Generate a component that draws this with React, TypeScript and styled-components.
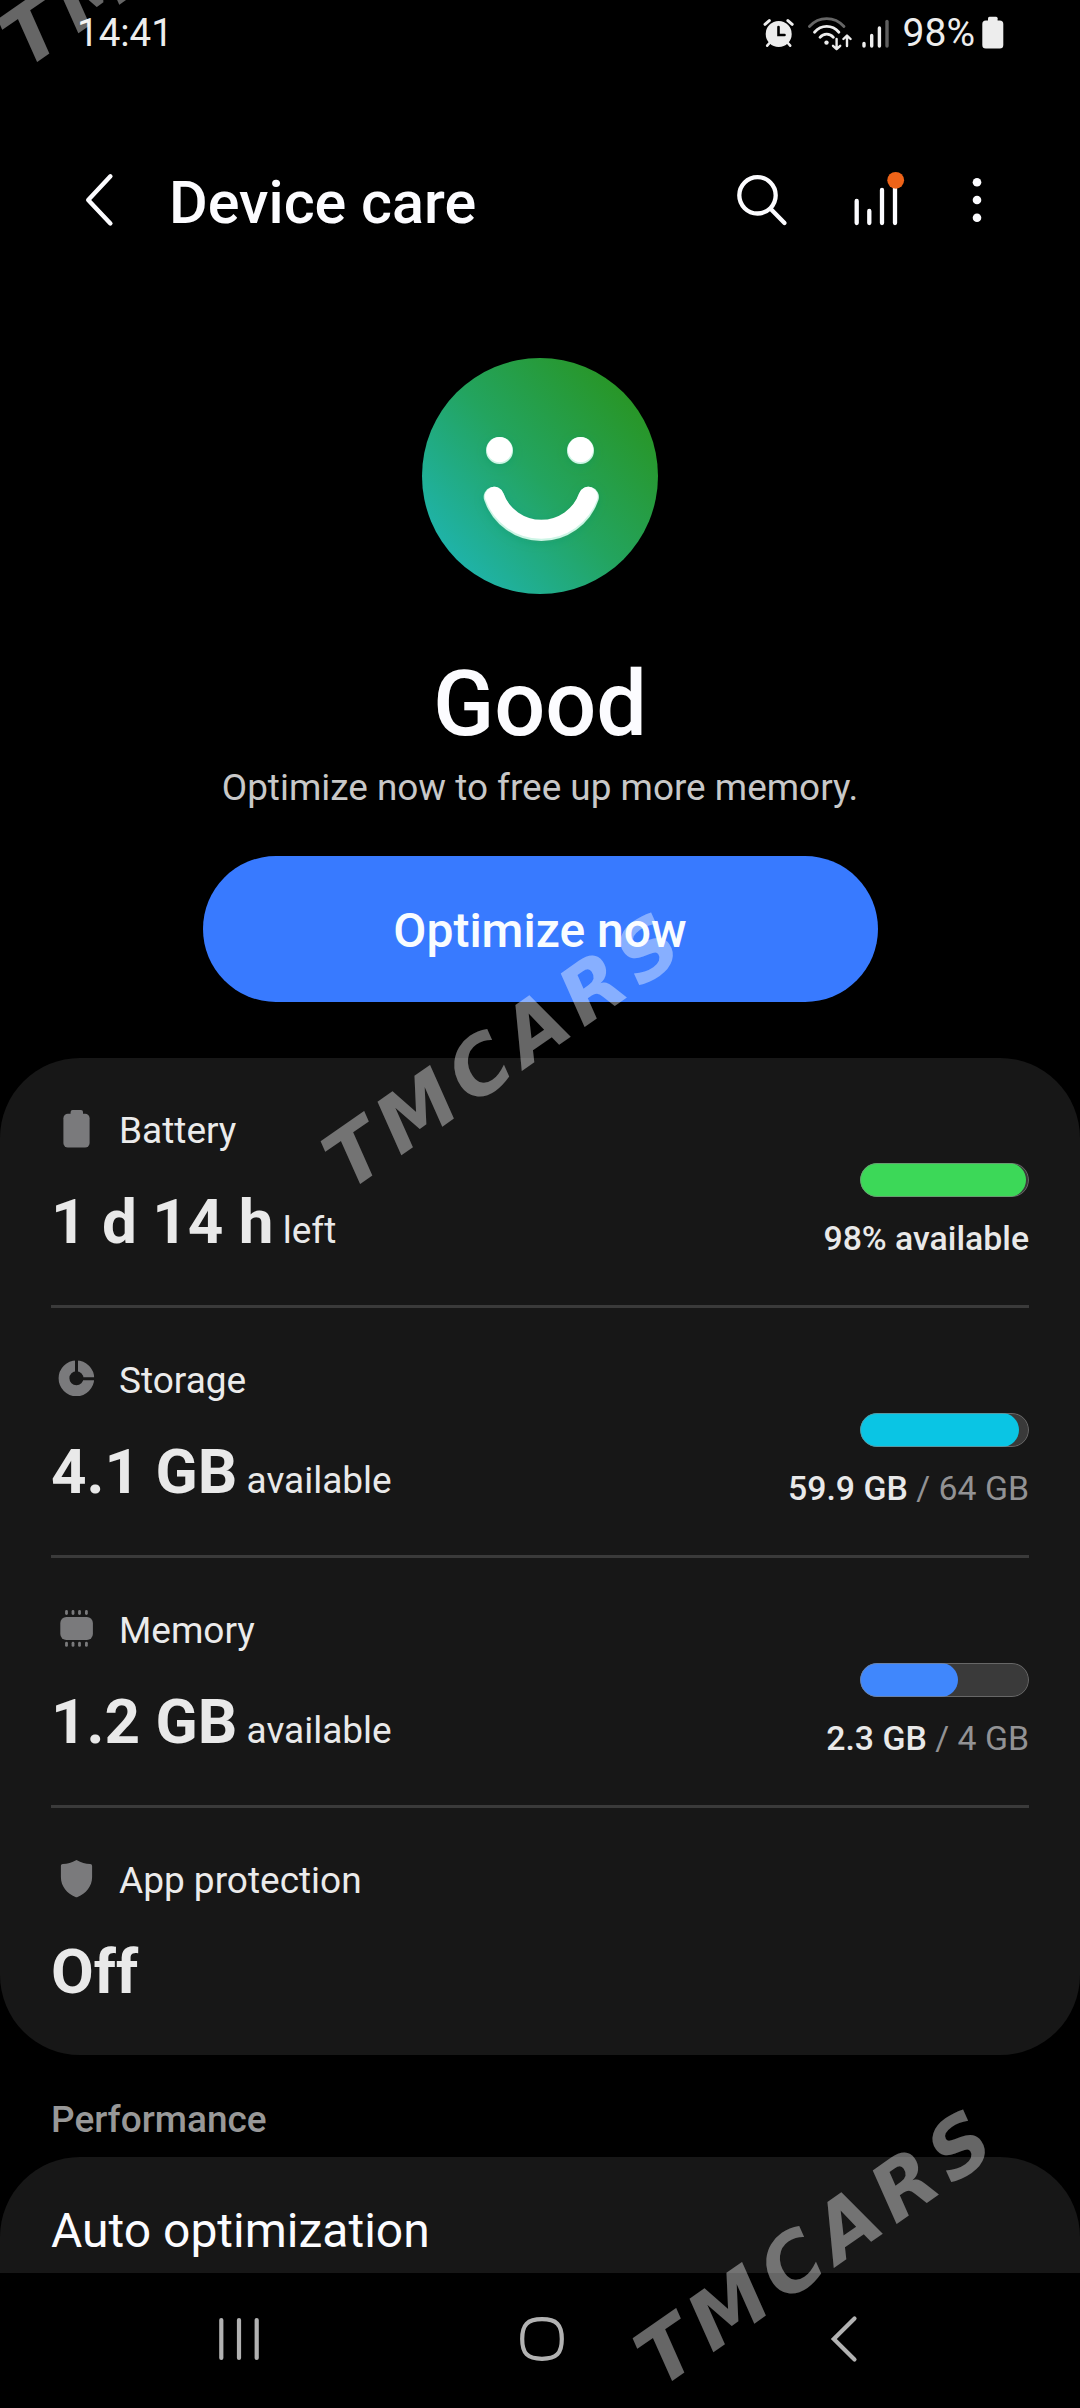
import React from "react";
import styled, { createGlobalStyle } from "styled-components";

const GlobalStyle = createGlobalStyle`
  html, body { margin: 0; padding: 0; background: #000; }
  *, *::before, *::after { box-sizing: border-box; }
`;

const Screen = styled.main`
  position: relative;
  display: flex;
  flex-direction: column;
  width: 1080px;
  height: 2408px;
  overflow: hidden;
  background: #000;
  color: #fcfcff;
  font-family: Roboto, "Liberation Sans", sans-serif;
  svg { display: block; flex: none; }
`;

const StatusBar = styled.header`
  display: flex;
  align-items: center;
  justify-content: space-between;
  height: 66px;
  padding: 0 76px 0 77px;
  color: #ededed;
  font-size: 38.5px;
  line-height: 46px;
`;

const StatusIcons = styled.div`
  display: flex;
  align-items: center;
  gap: 8px;
`;

const BatteryLevel = styled.span`
  margin: 0 -1px 0 3.5px;
  font-size: 39px;
`;

const AppBar = styled.div`
  display: flex;
  align-items: center;
  height: 268px;
  padding: 0 92px 0 75px;
`;

const Title = styled.h1`
  flex: 1;
  margin: 5px 0 0 44px;
  font-size: 59.3px;
  font-weight: 500;
  line-height: 70px;
`;

const IconButton = styled.button<{ $gap?: number }>`
  display: flex;
  margin: 0 0 0 ${(p) => p.$gap ?? 0}px;
  padding: 0;
  border: 0;
  background: none;
  color: inherit;
`;

const Hero = styled.section`
  display: flex;
  flex-direction: column;
  align-items: center;
  height: 724px;
  padding-top: 24px;
`;

const Verdict = styled.h2`
  margin: 58px 0 0;
  font-size: 90px;
  font-weight: 500;
  line-height: 106px;
`;

const Hint = styled.p`
  margin: 8px 0 0;
  color: #c8c8c8;
  font-size: 36.9px;
  line-height: 44px;
`;

const PrimaryButton = styled.button`
  width: 675px;
  height: 146px;
  margin-top: 46px;
  padding: 3px 0 0;
  border: 0;
  border-radius: 73px;
  background: #387aff;
  color: #f8fcff;
  font: 500 48px/56px Roboto, "Liberation Sans", sans-serif;
`;

const Card = styled.section`
  height: 997px;
  padding: 0 51px;
  border-radius: 80px;
  background: #171717;
`;

const Row = styled.article`
  display: flex;
  justify-content: space-between;
  height: 250px;
  border-bottom: 3px solid #3a3a3a;
  &:last-child { height: 247px; border-bottom: 0; }
`;

const Info = styled.div`
  padding-top: 47px;
`;

const RowLabel = styled.div`
  display: flex;
  gap: 17px;
  height: 51px;
  color: #ebebeb;
  font-size: 37px;
  line-height: 51px;
`;

const RowValue = styled.div`
  margin-top: 29px;
  color: #e9e9e9;
  font-size: 62px;
  font-weight: 700;
  line-height: 73px;
  white-space: pre;
`;

const Unit = styled.span`
  font-size: 37px;
  font-weight: 400;
`;

const Usage = styled.div`
  display: flex;
  flex-direction: column;
  align-items: flex-end;
  padding-top: 105px;
`;

const Track = styled.div`
  position: relative;
  width: 169px;
  height: 34px;
  overflow: hidden;
  border-radius: 17px;
  background: #3a3a3a;
  &::after {
    content: "";
    position: absolute;
    inset: 0;
    border: 1px solid rgba(128, 128, 128, 0.65);
    border-radius: 17px;
  }
`;

const Fill = styled.div<{ $color: string }>`
  height: 100%;
  border-radius: 17px;
  background: ${(p) => p.$color};
`;

const UsageText = styled.div`
  margin-top: 21px;
  color: #e9e9e9;
  font-size: 33.8px;
  font-weight: 500;
  line-height: 41px;
  white-space: pre;
`;

const Total = styled.span`
  color: #929294;
  font-weight: 400;
`;

const SectionTitle = styled.h3`
  height: 102px;
  margin: 0;
  padding: 43px 51px 0;
  color: #989898;
  font-size: 37px;
  font-weight: 500;
  line-height: 44px;
`;

const SettingsList = styled.section`
  height: 116px;
  padding: 44px 51px 0;
  border-radius: 80px 80px 0 0;
  background: #171717;
  font-size: 48px;
  line-height: 60px;
`;

const NavBar = styled.nav`
  display: flex;
  align-items: center;
  justify-content: space-between;
  height: 135px;
  padding: 0 206px 4px 209px;
  color: #b2b2b2;
`;

const Watermark = styled.div<{ $x: number; $y: number }>`
  position: absolute;
  left: ${(p) => p.$x}px;
  top: ${(p) => p.$y}px;
  color: rgba(255, 255, 255, 0.4);
  font: italic 700 79px/1 "DejaVu Sans", sans-serif;
  font-kerning: none;
  letter-spacing: 8.6px;
  white-space: nowrap;
  transform: rotate(-35deg);
  transform-origin: 0 0;
  pointer-events: none;
`;

const AlarmIcon = () => (
  <svg width="36" height="32" viewBox="0 0 36 32" fill="none" stroke="#ededed" strokeLinecap="round">
    <circle cx="15.7" cy="17" r="13" fill="#ededed" stroke="none" />
    <path d="M2 7.3 6.3 3.6M29.2 7.3 24.9 3.6" strokeWidth="3" />
    <path d="M7 25.5 4.2 28.7M24.4 25.5 27.2 28.7" strokeWidth="2.6" />
    <path d="M15.5 10v8h6" stroke="#000" strokeWidth="2.6" />
  </svg>
);

const WifiIcon = () => (
  <svg width="46" height="36" viewBox="0 0 46 36" fill="none" stroke="#ededed" strokeWidth="2.8" strokeLinecap="round" strokeLinejoin="round">
    <path d="M2.4 11.5C12 1 27.4 1 37 11.5" stroke="#666" />
    <path d="M7.5 17.2c6.8-7.7 17.6-7.7 24.4 0" />
    <path d="M13 22.3c3.7-4.3 9.7-4.3 13.4 0" />
    <circle cx="19.5" cy="27.6" r="2.2" fill="#ededed" stroke="none" />
    <path d="M29.6 24v10M26 30.8l3.6 3.4 3.6-3.4" strokeWidth="2.4" />
    <path d="M40 31V21M36.4 24l3.6-3.4 3.6 3.4" strokeWidth="2.4" />
  </svg>
);

const SignalIcon = () => (
  <svg width="30" height="32" viewBox="0 0 30 32" strokeWidth="3.4" strokeLinecap="round" stroke="#ededed">
    <path d="M3 26.5v2.5M10.7 18.5v10.5M18.4 11v18" />
    <path d="M26 4.5v24.5" stroke="#5f5f5f" />
  </svg>
);

const StatusBatteryIcon = () => (
  <svg width="22" height="34" viewBox="0 0 22 34" fill="#ededed">
    <rect x="0.3" y="4.5" width="21" height="28" rx="3.5" />
    <rect x="6" y="0.8" width="9.6" height="8" rx="1.5" />
  </svg>
);

const BackIcon = () => (
  <svg width="50" height="60" viewBox="0 0 50 60" fill="none" stroke="currentColor" strokeWidth="4.4" strokeLinecap="round" strokeLinejoin="round">
    <path d="M35.4 6.3 13.2 30l22.2 23.500" />
  </svg>
);

const SearchIcon = () => (
  <svg width="60" height="60" viewBox="0 0 60 60" fill="none" stroke="currentColor" strokeWidth="4.3" strokeLinecap="round">
    <circle cx="27.5" cy="25.3" r="18.2" />
    <path d="M41.5 39.8 54.5 53" />
  </svg>
);

const ReportIcon = () => (
  <svg width="60" height="60" viewBox="0 0 60 60" fill="none" stroke="currentColor" strokeWidth="4.3" strokeLinecap="round">
    <path d="M11.7 31v22M24.3 41v12M37 20v33M50 14v39" />
    <circle cx="50.7" cy="10.3" r="8.4" fill="#ee6318" stroke="none" />
  </svg>
);

const MoreIcon = () => (
  <svg width="20" height="60" viewBox="0 0 20 60" fill="currentColor">
    <circle cx="9" cy="12.3" r="4.3" />
    <circle cx="9" cy="30" r="4.3" />
    <circle cx="9" cy="47.8" r="4.3" />
  </svg>
);

const SmileyIcon = () => (
  <svg width="236" height="236" viewBox="0 0 236 236" fill="none" strokeLinecap="round">
    <defs>
      <linearGradient id="face" x1="0.12" y1="0.84" x2="0.88" y2="0.18">
        <stop offset="0" stopColor="#1fb3a9" />
        <stop offset="0.5" stopColor="#23a45f" />
        <stop offset="1" stopColor="#289628" />
      </linearGradient>
      <filter id="glow" x="-20%" y="-20%" width="140%" height="150%">
        <feDropShadow dx="0" dy="2" stdDeviation="5" floodColor="#149065" floodOpacity="0.35" />
      </filter>
    </defs>
    <circle cx="118" cy="118" r="118" fill="url(#face)" />
    <g filter="url(#glow)">
      <circle cx="77.5" cy="92.5" r="13.5" fill="#cdf5e6" />
      <circle cx="158.5" cy="92.5" r="13.5" fill="#cdf5e6" />
      <path d="M72 139a50 50 0 0 0 94.6 0" stroke="#cdf5e6" strokeWidth="20.5" />
      <circle cx="77.5" cy="91.6" r="12.6" fill="#fff" />
      <circle cx="158.5" cy="91.6" r="12.6" fill="#fff" />
      <path d="M72.3 138.3a50 50 0 0 0 94 0" stroke="#fff" strokeWidth="18.8" />
    </g>
  </svg>
);

const RowSvg = ({ children }: { children: React.ReactNode }) => (
  <svg width="51" height="51" viewBox="0 0 51 51" fill="#7a7a7c">
    {children}
  </svg>
);

const BatteryIcon = () => (
  <RowSvg>
    <rect x="12.4" y="8.7" width="26.2" height="33.8" rx="4.5" />
    <rect x="19.6" y="5" width="12.4" height="8" rx="2" />
  </RowSvg>
);

const StorageIcon = () => (
  <RowSvg>
    <circle cx="25.4" cy="23.3" r="12.4" fill="none" stroke="#7a7a7c" strokeWidth="10.8" />
    <path d="M25.5 4v14M31 23.8h14" stroke="#171717" strokeWidth="3" />
  </RowSvg>
);

const MemoryIcon = () => (
  <RowSvg>
    <rect x="9.3" y="12" width="32.6" height="23" rx="6" />
    {[15.5, 22, 28.5, 35.4].map((x) => (
      <React.Fragment key={x}>
        <rect x={x - 1.4} y="5" width="2.8" height="5" rx="1.4" />
        <rect x={x - 1.4} y="36.8" width="2.8" height="5" rx="1.4" />
      </React.Fragment>
    ))}
  </RowSvg>
);

const ShieldIcon = () => (
  <RowSvg>
    <path d="M25.5 5c4.8 2.6 9 3.8 13.7 4.1 1.2.1 1.9.8 1.9 2V22c0 9.5-6.3 16.600-14.5 20.100q-1.1.4-2.200 0C16.200 38.600 9.900 31.500 9.900 22V11.100c0-1.200.7-1.900 1.900-2C16.500 8.800 20.700 7.600 25.500 5Z" />
  </RowSvg>
);

const RecentsIcon = () => (
  <svg width="60" height="60" viewBox="0 0 60 60" stroke="currentColor" strokeWidth="4.2" strokeLinecap="round">
    <path d="M12.3 11v38M30 11v38M47.7 11v38" />
  </svg>
);

const HomeIcon = () => (
  <svg width="60" height="60" viewBox="0 0 60 60" fill="none" stroke="currentColor" strokeWidth="4.2">
    <path d="M30 10.2c14.5 0 19.8 5.3 19.8 19.8S44.500 49.800 30 49.800 10.200 44.500 10.200 30 15.500 10.200 30 10.200Z" />
  </svg>
);

const NavBackIcon = () => (
  <svg width="60" height="60" viewBox="0 0 60 60" fill="none" stroke="currentColor" strokeWidth="4.2" strokeLinecap="round">
    <path d="M40.5 9.5 19.8 30l20.700 20.500" />
  </svg>
);

type RowData = {
  icon: React.ReactNode;
  label: string;
  value: string;
  unit?: string;
  fill?: number;
  color?: string;
  used?: string;
  total?: string;
};

const rows: RowData[] = [
  { icon: <BatteryIcon />, label: "Battery", value: "1 d 14 h", unit: " left", fill: 98, color: "#3cd858", used: "98% available" },
  { icon: <StorageIcon />, label: "Storage", value: "4.1 GB", unit: " available", fill: 94, color: "#0ac5e4", used: "59.9 GB", total: " / 64 GB" },
  { icon: <MemoryIcon />, label: "Memory", value: "1.2 GB", unit: " available", fill: 58, color: "#4087fc", used: "2.3 GB", total: " / 4 GB" },
  { icon: <ShieldIcon />, label: "App protection", value: "Off" },
];

const marks = [
  { x: -12.3, y: 15.6 },
  { x: 310.5, y: 1137.9 },
  { x: 623.4, y: 2334.5 },
];

export default function App() {
  return (
    <>
      <GlobalStyle />
      <Screen>
        <StatusBar>
          <span>14:41</span>
          <StatusIcons>
            <AlarmIcon />
            <WifiIcon />
            <SignalIcon />
            <BatteryLevel>98%</BatteryLevel>
            <StatusBatteryIcon />
          </StatusIcons>
        </StatusBar>
        <AppBar>
          <IconButton aria-label="Back"><BackIcon /></IconButton>
          <Title>Device care</Title>
          <IconButton aria-label="Search"><SearchIcon /></IconButton>
          <IconButton aria-label="Report" $gap={55}><ReportIcon /></IconButton>
          <IconButton aria-label="More options" $gap={63}><MoreIcon /></IconButton>
        </AppBar>
        <Hero>
          <SmileyIcon />
          <Verdict>Good</Verdict>
          <Hint>Optimize now to free up more memory.</Hint>
          <PrimaryButton>Optimize now</PrimaryButton>
        </Hero>
        <Card>
          {rows.map((row) => (
            <Row key={row.label}>
              <Info>
                <RowLabel>{row.icon}<span>{row.label}</span></RowLabel>
                <RowValue>{row.value}{row.unit && <Unit>{row.unit}</Unit>}</RowValue>
              </Info>
              {row.color && (
                <Usage>
                  <Track><Fill $color={row.color} style={{ width: `${row.fill}%` }} /></Track>
                  <UsageText>{row.used}{row.total && <Total>{row.total}</Total>}</UsageText>
                </Usage>
              )}
            </Row>
          ))}
        </Card>
        <SectionTitle>Performance</SectionTitle>
        <SettingsList>Auto optimization</SettingsList>
        <NavBar>
          <IconButton aria-label="Recents"><RecentsIcon /></IconButton>
          <IconButton aria-label="Home"><HomeIcon /></IconButton>
          <IconButton aria-label="Back"><NavBackIcon /></IconButton>
        </NavBar>
        {marks.map((m) => (
          <Watermark key={m.y} $x={m.x} $y={m.y} aria-hidden>TMCARS</Watermark>
        ))}
      </Screen>
    </>
  );
}
